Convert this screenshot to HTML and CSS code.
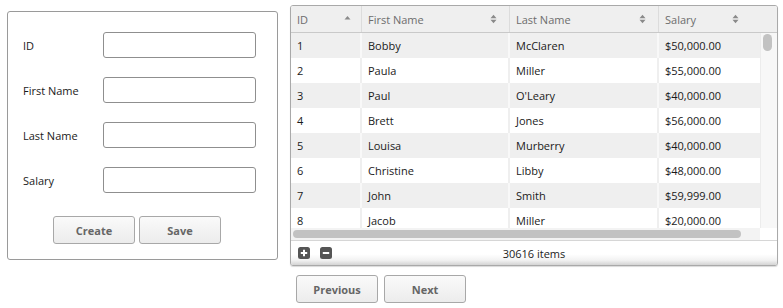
FILE: index.html
```html
<!DOCTYPE html>
<html lang="en">
<head>
    <meta charset="UTF-8">
    <title>Employees</title>
    <link rel="stylesheet" href="styles.css">
</head>
<body>
    <div class="page">
        <form class="panel" id="employeeForm">
            <div class="field"><label for="empId">ID</label><input type="text" id="empId"></div>
            <div class="field"><label for="firstName">First Name</label><input type="text" id="firstName"></div>
            <div class="field"><label for="lastName">Last Name</label><input type="text" id="lastName"></div>
            <div class="field"><label for="salary">Salary</label><input type="text" id="salary"></div>
            <div class="actions">
                <button type="button" class="btn">Create</button>
                <button type="button" class="btn">Save</button>
            </div>
        </form>

        <div class="side">
            <div class="grid">
                <div class="grid-head">
                    <div class="hcell c-id">ID
                        <svg class="sort" width="7" height="10" viewBox="0 0 7 10"><path d="M0.5 5.5 L3.5 2 L6.5 5.5 Z"/></svg>
                    </div>
                    <div class="hcell c-first">First Name
                        <svg class="sort" width="7" height="10" viewBox="0 0 7 10"><path d="M0.5 4.2 L3.5 0.8 L6.5 4.2 Z M0.5 5.8 L3.5 9.2 L6.5 5.8 Z"/></svg>
                    </div>
                    <div class="hcell c-last">Last Name
                        <svg class="sort" width="7" height="10" viewBox="0 0 7 10"><path d="M0.5 4.2 L3.5 0.8 L6.5 4.2 Z M0.5 5.8 L3.5 9.2 L6.5 5.8 Z"/></svg>
                    </div>
                    <div class="hcell c-salary">Salary
                        <svg class="sort" width="7" height="10" viewBox="0 0 7 10"><path d="M0.5 4.2 L3.5 0.8 L6.5 4.2 Z M0.5 5.8 L3.5 9.2 L6.5 5.8 Z"/></svg>
                    </div>
                    <div class="hcell c-gap"></div>
                </div>

                <div class="grid-main">
                    <div class="grid-rows" id="gridRows"></div>
                    <div class="vscroll"><span class="vthumb"></span></div>
                </div>

                <div class="hscroll">
                    <div class="htrack"><span class="hthumb"></span></div>
                    <div class="corner"></div>
                </div>

                <div class="grid-foot">
                    <div class="foot-tools">
                        <span class="tool">
                            <svg width="12" height="12" viewBox="0 0 12 12"><rect x="0" y="0" width="12" height="12" rx="2.5" fill="#555"/><path d="M6 2.8 V9.2 M2.8 6 H9.2" stroke="#fff" stroke-width="2"/></svg>
                        </span>
                        <span class="tool">
                            <svg width="12" height="12" viewBox="0 0 12 12"><rect x="0" y="0" width="12" height="12" rx="2.5" fill="#555"/><path d="M2.8 6 H9.2" stroke="#fff" stroke-width="2"/></svg>
                        </span>
                    </div>
                    <div class="foot-count">30616 items</div>
                    <div></div>
                </div>
            </div>

            <div class="pager">
                <button type="button" class="btn">Previous</button>
                <button type="button" class="btn">Next</button>
            </div>
        </div>
    </div>

    <script>
        const employees = [
            { id: 1, first: 'Bobby', last: 'McClaren', salary: '$50,000.00' },
            { id: 2, first: 'Paula', last: 'Miller', salary: '$55,000.00' },
            { id: 3, first: 'Paul', last: "O'Leary", salary: '$40,000.00' },
            { id: 4, first: 'Brett', last: 'Jones', salary: '$56,000.00' },
            { id: 5, first: 'Louisa', last: 'Murberry', salary: '$40,000.00' },
            { id: 6, first: 'Christine', last: 'Libby', salary: '$48,000.00' },
            { id: 7, first: 'John', last: 'Smith', salary: '$59,999.00' },
            { id: 8, first: 'Jacob', last: 'Miller', salary: '$20,000.00' }
        ];

        const rows = document.getElementById('gridRows');
        employees.forEach(emp => {
            const row = document.createElement('div');
            row.classList.add('row');
            row.innerHTML = `
                <div class="cell c-id">${emp.id}</div>
                <div class="cell c-first">${emp.first}</div>
                <div class="cell c-last">${emp.last}</div>
                <div class="cell c-salary">${emp.salary}</div>
            `;
            rows.appendChild(row);
        });
    </script>
</body>
</html>
```

FILE: styles.css
```css
body {
    margin: 0;
    font-family: "Open Sans", Arial, sans-serif;
    font-size: 11px;
    color: #1a1a1a;
    background-color: #fff;
}

.page {
    display: flex;
    align-items: flex-start;
    gap: 12px;
    padding: 5px 0 0 7px;
}

/* form panel */

.panel {
    width: 239px;
    margin: 6px 0 0;
    padding: 20px 15px 15px;
    border: 1px solid #9a9a9a;
    border-radius: 3px;
    display: flex;
    flex-direction: column;
    gap: 19px;
}

.field {
    display: flex;
    align-items: center;
    height: 26px;
}

.field label {
    width: 80px;
}

.field input {
    width: 153px;
    height: 26px;
    padding: 0 4px;
    box-sizing: border-box;
    border: 1px solid #8f8f8f;
    border-radius: 3px;
    font: inherit;
}

.actions {
    display: flex;
    justify-content: center;
    gap: 4px;
    margin-top: 4px;
    padding-right: 11px;
}

.btn {
    width: 82px;
    height: 28px;
    border: 1px solid #a8a8a8;
    border-radius: 3px;
    background: linear-gradient(#fafafa, #ececec);
    color: #666;
    font-family: inherit;
    font-size: 11px;
    font-weight: bold;
    cursor: pointer;
}

/* data grid */

.side {
    display: flex;
    flex-direction: column;
}

.grid {
    width: 486px;
    border: 1px solid #a9a9a9;
    border-radius: 3px;
    overflow: hidden;
    box-shadow: 0 1px 1px rgba(0, 0, 0, 0.15);
}

.hcell,
.cell {
    flex: none;
}

.c-id { width: 71px; }
.c-first { width: 148px; }
.c-last { width: 149px; }
.c-salary { width: 101px; }
.c-gap { width: 17px; }

.grid-head {
    display: flex;
    height: 26px;
    background-color: #efefef;
    border-bottom: 1px solid #c9c9c9;
    color: #6d6d6d;
}

.hcell {
    box-sizing: border-box;
    display: flex;
    align-items: center;
    justify-content: space-between;
    padding: 0 12px 0 6px;
    border-right: 1px solid #dcdcdc;
}

.c-id.hcell {
    padding-right: 10px;
}

.c-salary.hcell {
    padding-right: 21px;
    border-right: none;
}

.hcell.c-gap {
    border-right: none;
}

.sort {
    fill: #8a8a8a;
}

.grid-main {
    display: flex;
    height: 195px;
    overflow: hidden;
}

.grid-rows {
    width: 469px;
}

.row {
    display: flex;
    height: 25px;
}

.row:nth-child(odd) {
    background-color: #efefef;
}

.cell {
    box-sizing: border-box;
    display: flex;
    align-items: center;
    padding: 0 6px;
    border-right: 2px solid #f8f8f8;
}

.row:nth-child(even) .cell {
    border-right-color: #efefef;
}

.cell.c-salary {
    border-right: none;
}

.vscroll {
    width: 17px;
    background-color: #f7f7f7;
    border-left: 1px solid #ececec;
    box-sizing: border-box;
    padding: 1px 0 0 2px;
}

.vthumb {
    display: block;
    width: 9px;
    height: 17px;
    border-radius: 5px;
    background-color: #c2c2c2;
}

.hscroll {
    display: flex;
    height: 12px;
    border-bottom: 1px solid #d6d6d6;
}

.htrack {
    width: 469px;
    background-color: #f3f3f3;
    padding: 2px 2px 0;
    box-sizing: border-box;
}

.hthumb {
    display: block;
    width: 448px;
    height: 8px;
    border-radius: 4px;
    background-color: #c2c2c2;
}

.corner {
    flex: 1;
    background-color: #fff;
}

.grid-foot {
    display: grid;
    grid-template-columns: 1fr auto 1fr;
    align-items: center;
    height: 24px;
    background: linear-gradient(#ffffff 55%, #f2f2f2 80%, #d4d4d4);
}

.foot-tools {
    display: flex;
    gap: 10px;
    padding-left: 7px;
}

.tool {
    display: flex;
}

.foot-count {
    color: #222;
}

.pager {
    display: flex;
    gap: 6px;
    margin: 9px 0 0 6px;
}
```
